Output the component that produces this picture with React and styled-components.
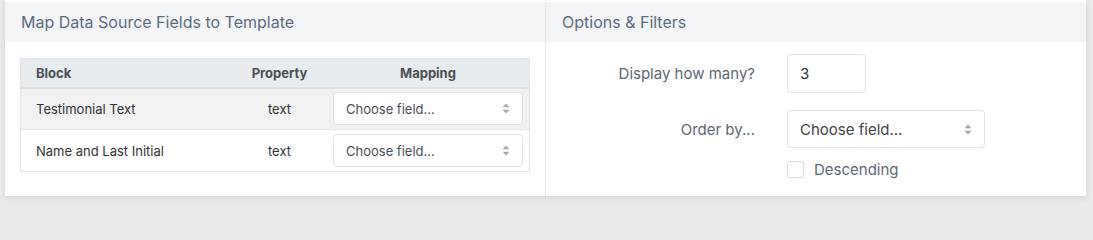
import React from "react";
import styled, { createGlobalStyle } from "styled-components";

const Global = createGlobalStyle`
  html, body { margin: 0; padding: 0; background: #e9eaec; }
  body { font-family: Inter, "Noto Sans", "Liberation Sans", sans-serif; -webkit-font-smoothing: antialiased; }
  * { box-sizing: border-box; }
`;

const Page = styled.div`
  padding: 0 7px 9px 5px;
`;

const Card = styled.div`
  background: #fff;
  padding-top: 2px;
  display: grid;
  grid-template-columns: 540px 1fr;
  box-shadow: 0 2px 6px rgba(0, 0, 0, 0.1);
  height: 196px;
`;

const Panel = styled.section`
  display: flex;
  flex-direction: column;
  border-left: ${(p) => (p.$divided ? "1px solid #e6e8eb" : "none")};
`;

const PanelHeader = styled.header`
  height: 40px;
  background: #f4f5f7;
  padding: 0 16px;
  display: flex;
  align-items: center;
  font-size: 16px;
  color: #5c6c7d;
  font-weight: 400;
`;

const PanelBody = styled.div`
  padding: ${(p) => p.$pad};
`;

const Table = styled.table`
  width: 100%;
  border-collapse: collapse;
  border: 1px solid #e1e4e8;
  font-size: 13px;
  color: #333;
`;

const Th = styled.th`
  background: #e9ecef;
  font-weight: 700;
  color: #4a4f55;
  height: 29px;
  padding: 0 15px;
  text-align: ${(p) => p.$align || "left"};
  width: ${(p) => p.$w || "auto"};
  border-bottom: 2px solid #dee2e6;
`;

const Tr = styled.tr`
  background: ${(p) => (p.$striped ? "#f2f2f2" : "#fff")};
  border-top: 1px solid #e1e4e8;
`;

const Td = styled.td`
  height: 42px;
  padding: ${(p) => (p.$tight ? "0 6px" : "0 15px")};
  text-align: ${(p) => p.$align || "left"};
`;

const SelectBox = styled.div`
  display: flex;
  align-items: center;
  justify-content: space-between;
  width: ${(p) => p.$w};
  height: ${(p) => p.$h};
  background: #fff;
  border: 1px solid #dfe2e6;
  border-radius: 4px;
  padding: 0 12px 0 12px;
  font-size: ${(p) => p.$fs};
  color: ${(p) => p.$color};
`;

const Arrows = () => (
  <svg width="8" height="11" viewBox="0 0 8 11">
    <path d="M4 0.5 L7.5 4.3 H0.5 Z" fill="#a5a9ad" />
    <path d="M4 10.5 L7.5 6.7 H0.5 Z" fill="#a5a9ad" />
  </svg>
);

const Select = ({ w, h, fs, color, children }) => (
  <SelectBox $w={w} $h={h} $fs={fs} $color={color}>
    <span>{children}</span>
    <Arrows />
  </SelectBox>
);

const Form = styled.div`
  display: grid;
  grid-template-columns: 194px 1fr;
  column-gap: 32px;
  row-gap: 17px;
  align-items: center;
  padding: 12px 15px 0 15px;
`;

const Label = styled.label`
  text-align: right;
  font-size: 15px;
  color: #5c6774;
`;

const NumberInput = styled.div`
  width: 79px;
  height: 39px;
  border: 1px solid #dfe2e6;
  border-radius: 4px;
  display: flex;
  align-items: center;
  padding: 0 12px;
  font-size: 15px;
  color: #333;
`;

const CheckRow = styled.div`
  grid-column: 2;
  display: flex;
  align-items: center;
  gap: 10px;
  margin-top: -5px;
  font-size: 15px;
  color: #5c6774;
`;

const Checkbox = styled.span`
  width: 17px;
  height: 17px;
  border: 1px solid #d9dce0;
  border-radius: 2px;
  background: #fff;
`;

const rows = [
  { block: "Testimonial Text", prop: "text" },
  { block: "Name and Last Initial", prop: "text" },
];

export default function App() {
  return (
    <>
      <Global />
      <Page>
        <Card>
          <Panel>
            <PanelHeader>Map Data Source Fields to Template</PanelHeader>
            <PanelBody $pad="16px 15px 0 15px">
              <Table>
                <thead>
                  <tr>
                    <Th>Block</Th>
                    <Th $align="center" $w="95px">Property</Th>
                    <Th $align="center" $w="202px">Mapping</Th>
                  </tr>
                </thead>
                <tbody>
                  {rows.map((r, i) => (
                    <Tr key={r.block} $striped={i % 2 === 0}>
                      <Td>{r.block}</Td>
                      <Td $align="center" $tight>{r.prop}</Td>
                      <Td $tight>
                        <Select w="190px" h="33px" fs="13px" color="#4a4f55">
                          Choose field...
                        </Select>
                      </Td>
                    </Tr>
                  ))}
                </tbody>
              </Table>
            </PanelBody>
          </Panel>
          <Panel $divided>
            <PanelHeader>Options &amp; Filters</PanelHeader>
            <Form>
              <Label>Display how many?</Label>
              <NumberInput>3</NumberInput>
              <Label>Order by...</Label>
              <Select w="198px" h="38px" fs="15px" color="#444">
                Choose field...
              </Select>
              <CheckRow>
                <Checkbox />
                Descending
              </CheckRow>
            </Form>
          </Panel>
        </Card>
      </Page>
    </>
  );
}
